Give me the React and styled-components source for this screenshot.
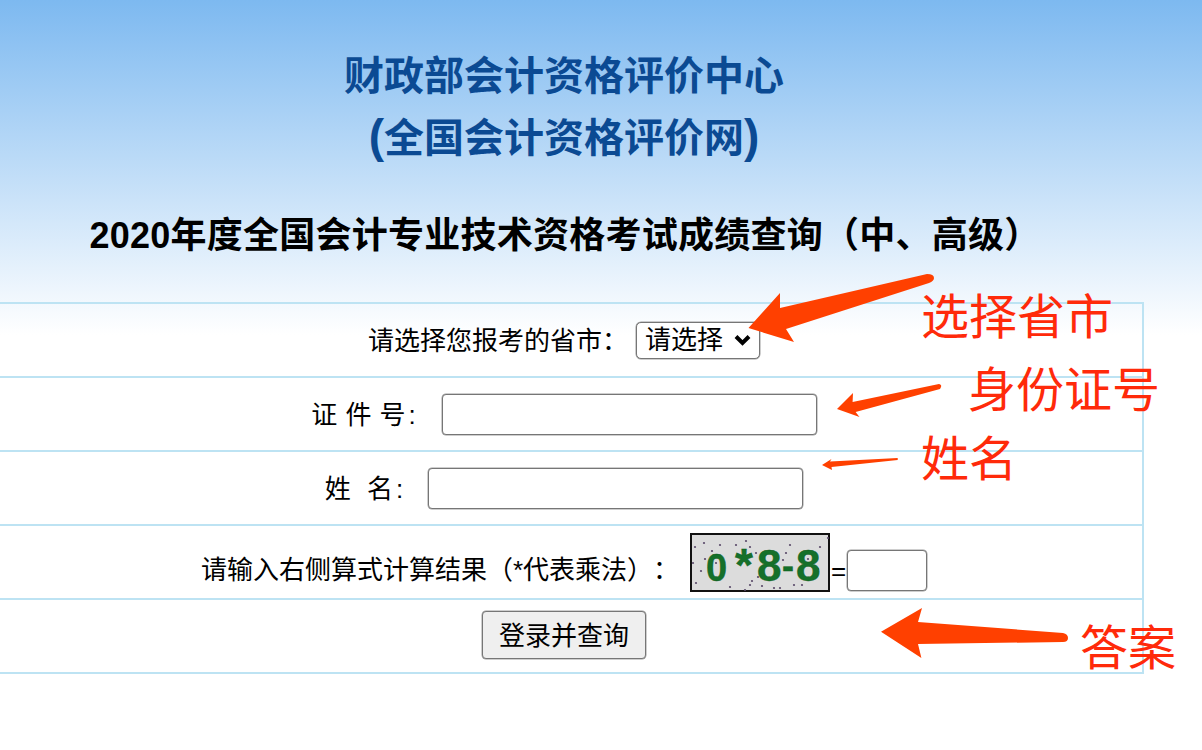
import React from 'react';
import styled, { createGlobalStyle } from 'styled-components';

const GlobalStyle = createGlobalStyle`
    html, body {
        margin: 0;
        padding: 0;
        background: #fff;
    }
    body {
        font-family: "Liberation Sans", "Noto Sans CJK SC", sans-serif;
        color: #000;
        overflow: hidden;
        text-spacing-trim: space-all;
    }
`;

const Page = styled.div`
    position: relative;
    width: 1202px;
    height: 750px;
    overflow: hidden;
    background: linear-gradient(#7db9f0 0, #ffffff 335px);
`;

const Column = styled.div`
    width: 1160px;
    margin-left: -16px;
    padding-top: 45px;
`;

const Title = styled.h1`
    margin: 0;
    font-size: 40px;
    line-height: 62px;
    font-weight: 700;
    color: #0b4a93;
    text-align: center;
`;

const Paren = styled.span`
    font-size: 46px;
    line-height: 0;
`;

const SubTitle = styled.h2`
    margin: 42px 0 41px;
    padding-left: 2px;
    font-size: 36px;
    line-height: 50px;
    font-weight: 700;
    letter-spacing: 0.25px;
    text-align: center;
`;

const Form = styled.form`
    margin-left: 2px;
    border-top: 2px solid #bde3f3;
    border-right: 2px solid #bde3f3;
`;

const Row = styled.div`
    display: flex;
    align-items: center;
    justify-content: center;
    gap: ${p => p.$gap || 0}px;
    height: 72px;
    border-bottom: 2px solid #bde3f3;
    font-size: 26px;
`;

const Label = styled.label`
    white-space: pre;
    word-spacing: 1px;
    padding: ${p => (p.$low ? '10px 0 0' : '0 0 4px')};
`;

const NarrowColon = styled.span`
    margin-left: 3px;
`;

const SelectWrap = styled.div`
    position: relative;
    width: 124px;
    height: 37px;
`;

const Select = styled.select`
    appearance: none;
    width: 100%;
    height: 100%;
    padding: 0 0 0 8px;
    border: 1px solid #767676;
    border-radius: 5px;
    box-shadow: 0 0 0 0.5px rgba(118, 118, 118, 0.7);
    background: #fff;
    color: #000;
    font: 26px "Liberation Sans", "Noto Sans CJK SC", sans-serif;
`;

const Chevron = styled.svg`
    position: absolute;
    right: 9px;
    top: 12px;
    width: 17px;
    height: 12px;
    pointer-events: none;
`;

const TextInput = styled.input`
    box-sizing: border-box;
    width: ${p => p.$width}px;
    height: 41px;
    padding: 0 6px;
    border: 1px solid #767676;
    border-radius: 4px;
    box-shadow: 0 0 0 0.5px rgba(118, 118, 118, 0.7);
    background: #fff;
`;

const CaptchaGroup = styled.span`
    display: flex;
    align-items: flex-end;
    margin-left: 11px;
`;

const Captcha = styled.svg`
    display: block;
    width: 140px;
    height: 59px;
`;

const CaptchaChar = styled.text`
    font-family: "Liberation Sans", sans-serif;
    font-weight: 700;
    font-size: ${p => p.$size}px;
    fill: #15702a;
    stroke: #0a5a18;
    stroke-width: 0.4px;
`;

const Equals = styled.span`
    width: 17px;
    font-size: 26px;
    line-height: 41px;
    text-align: center;
`;

const GroupInput = styled(TextInput)`
    margin-bottom: 1px;
`;

const SubmitButton = styled.button`
    width: 164px;
    height: 48px;
    margin-bottom: 2px;
    padding: 0 0 3px;
    border: 1px solid #767676;
    border-radius: 4px;
    box-shadow: 0 0 0 0.5px rgba(118, 118, 118, 0.7);
    background: #efefef;
    color: #000;
    font: 26px "Liberation Sans", "Noto Sans CJK SC", sans-serif;
`;

const Overlay = styled.svg`
    position: absolute;
    left: 0;
    top: 0;
    width: 1202px;
    height: 750px;
    pointer-events: none;
`;

const Note = styled.div`
    position: absolute;
    left: ${p => p.$x}px;
    top: ${p => p.$y}px;
    font-size: 48px;
    line-height: 56px;
    color: #ff2a0a;
    white-space: nowrap;
    font-family: "Noto Sans CJK SC", sans-serif;
`;

const dots = [
    [5, 14], [14, 10], [22, 18], [30, 12], [15, 26], [11, 38], [6, 50], [26, 30], [46, 12], [56, 8],
    [60, 14], [66, 20], [96, 20], [100, 12], [93, 27], [130, 14], [128, 36], [68, 44], [60, 52], [62, 48],
    [72, 53], [84, 55], [90, 55], [104, 52], [112, 52], [138, 5], [3, 30], [55, 57], [118, 26], [40, 54]
];

const arrows = [
    'M927 274 Q934 274 934 278 Q934 281 929 283 L786 329 L794 342 L748.5 328 L780 293 L780 308 Z',
    'M939 384 Q942 385 941 387 L940 389 L855.6 412 L859.5 417 L837 409 L853 393 L852.6 402 Z',
    'M897.7 458 L897.7 460 L831.5 467 L832 470 L822 465 L831.5 459 L830 461.5 Z',
    'M1063 633 Q1068 634 1068 638 Q1068 642 1063 642 L918 644 L921.4 658 L881 631.7 L922 608 L918 622 Z'
];

const App = () => {
    return (
        <Page>
            <GlobalStyle />
            <Column>
                <Title>财政部会计资格评价中心<br /><Paren>(</Paren>全国会计资格评价网<Paren>)</Paren></Title>
                <SubTitle>2020年度全国会计专业技术资格考试成绩查询（中、高级）</SubTitle>
                <Form onSubmit={e => e.preventDefault()}>
                    <Row $gap={8}>
                        <Label>请选择您报考的省市：</Label>
                        <SelectWrap>
                            <Select defaultValue="">
                                <option value="">请选择</option>
                            </Select>
                            <Chevron viewBox="0 0 17 12">
                                <path d="M2 2.5 L8.5 9 L15 2.5" fill="none" stroke="#000" strokeWidth="4" />
                            </Chevron>
                        </SelectWrap>
                    </Row>
                    <Row $gap={26}>
                        <Label>证 件 号<NarrowColon>:</NarrowColon></Label>
                        <TextInput $width={375} />
                    </Row>
                    <Row $gap={25}>
                        <Label>姓&nbsp;&nbsp;名<NarrowColon>:</NarrowColon></Label>
                        <TextInput $width={375} />
                    </Row>
                    <Row>
                        <Label $low>请输入右侧算式计算结果（*代表乘法）：</Label>
                        <CaptchaGroup>
                            <Captcha viewBox="0 0 140 59">
                                <rect x="1" y="1" width="138" height="57" fill="#dcdcdc" stroke="#111" strokeWidth="2" />
                                {dots.map(([x, y], i) => (
                                    <circle key={i} cx={x} cy={y} r="1.1" fill="#5a4a6a" />
                                ))}
                                <CaptchaChar x="16" y="48" $size={38}>0</CaptchaChar>
                                <CaptchaChar x="45" y="48" $size={46}>*</CaptchaChar>
                                <CaptchaChar x="67" y="48" $size={44}>8</CaptchaChar>
                                <CaptchaChar x="92" y="45" $size={36}>-</CaptchaChar>
                                <CaptchaChar x="106" y="48" $size={44}>8</CaptchaChar>
                            </Captcha>
                            <Equals>=</Equals>
                            <GroupInput $width={80} />
                        </CaptchaGroup>
                    </Row>
                    <Row>
                        <SubmitButton type="button">登录并查询</SubmitButton>
                    </Row>
                </Form>
            </Column>
            <Overlay viewBox="0 0 1202 750">
                {arrows.map(d => (
                    <path key={d} d={d} fill="#ff4000" />
                ))}
            </Overlay>
            <Note $x={921} $y={285}>选择省市</Note>
            <Note $x={968} $y={358}>身份证号</Note>
            <Note $x={921} $y={427}>姓名</Note>
            <Note $x={1080} $y={616}>答案</Note>
        </Page>
    );
};

export default App;
